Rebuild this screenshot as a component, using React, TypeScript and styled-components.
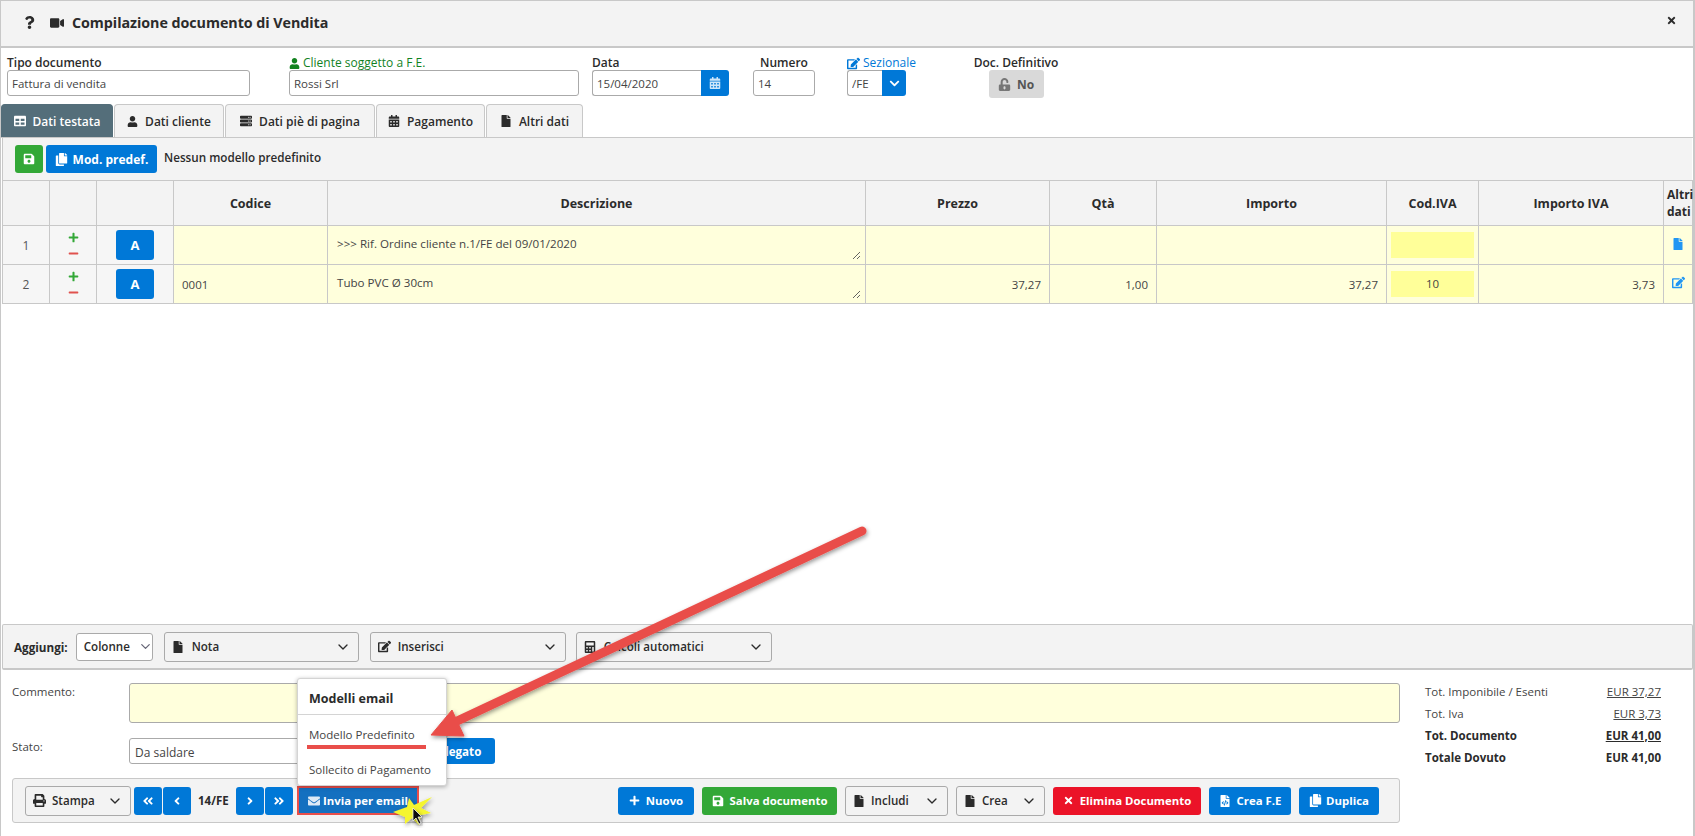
import React from "react";
import styled, { createGlobalStyle } from "styled-components";
import {
  FaQuestion,
  FaVideo,
  FaTimes,
  FaUser,
  FaEdit,
  FaCalendarAlt,
  FaChevronDown,
  FaUnlockAlt,
  FaTable,
  FaServer,
  FaFile,
  FaSave,
  FaCopy,
  FaPlus,
  FaMinus,
  FaPrint,
  FaAngleDoubleLeft,
  FaAngleLeft,
  FaAngleRight,
  FaAngleDoubleRight,
  FaEnvelope,
  FaCalculator,
  FaFileCode,
  FaPaperclip,
} from "react-icons/fa";
import { FiChevronDown } from "react-icons/fi";

const GlobalStyle = createGlobalStyle`
  html, body {
    margin: 0;
    padding: 0;
    background: #fff;
    overflow: hidden;
  }
  body {
    font-family: "Open Sans", "Liberation Sans", sans-serif;
    font-size: 12px;
    color: #333;
  }
  * { box-sizing: border-box; }
`;

const BLUE = "#0078d7";
const GREEN = "#33a837";
const LINE = "#c8c8c8";

const Page = styled.div`
  position: relative;
  width: 1695px;
  height: 836px;
  display: flex;
  flex-direction: column;
  border-left: 1px solid ${LINE};
  border-right: 2px solid ${LINE};
`;

const TitleBar = styled.header`
  height: 48px;
  flex: none;
  display: flex;
  align-items: center;
  gap: 14px;
  padding: 0 16px 2px 22px;
  background: #f3f3f3;
  border-top: 1px solid ${LINE};
  border-bottom: 2px solid ${LINE};
  color: #2b2b2b;
  svg { flex: none; }
`;

const TitleText = styled.h1`
  margin: 0 0 0 -6px;
  font-size: 14.3px;
  font-weight: 700;
  letter-spacing: -0.05px;
`;

const CloseButton = styled.span`
  margin: -5px 0 0 auto;
  display: flex;
`;

const Fields = styled.div`
  flex: none;
  height: 56px;
  display: flex;
  align-items: flex-start;
  padding: 8px 0 0 6px;
`;

const Field = styled.div<{ $width: number; $left?: number }>`
  width: ${(p) => p.$width}px;
  margin-left: ${(p) => p.$left ?? 0}px;
`;

const FieldLabel = styled.div<{ $color?: string; $light?: boolean; $center?: boolean }>`
  height: 14px;
  line-height: 14px;
  font-size: 12px;
  font-weight: ${(p) => (p.$light ? 400 : 600)};
  color: ${(p) => p.$color ?? "#2b2b2b"};
  white-space: nowrap;
  display: flex;
  align-items: center;
  gap: 3px;
  justify-content: ${(p) => (p.$center ? "center" : "flex-start")};
  svg { flex: none; }
`;

const TextInput = styled.input`
  display: block;
  width: 100%;
  height: 26px;
  padding: 0 4px;
  border: 1px solid #aaa;
  border-radius: 3px;
  background: #fff;
  font: 400 11.5px "Open Sans", sans-serif;
  color: #444;
  outline: none;
`;

const InputGroup = styled.div`
  display: flex;
  height: 26px;
  ${TextInput} {
    flex: 1;
    min-width: 0;
    border-right: 0;
    border-radius: 3px 0 0 3px;
  }
`;

const AddonButton = styled.span<{ $width: number }>`
  flex: none;
  width: ${(p) => p.$width}px;
  background: ${BLUE};
  border-radius: 0 3px 3px 0;
  color: #cfe6fa;
  display: flex;
  align-items: center;
  justify-content: center;
`;

const LockButton = styled.div`
  width: 55px;
  height: 28px;
  margin: 0 auto;
  background: #d9d9d9;
  border-radius: 3px;
  color: #555;
  font-weight: 700;
  font-size: 12px;
  display: flex;
  align-items: center;
  justify-content: center;
  gap: 6px;
`;

const Tabs = styled.nav`
  flex: none;
  height: 34px;
  display: flex;
  gap: 1px;
  border-bottom: 1px solid ${LINE};
`;

const Tab = styled.div<{ $width: number; $active?: boolean }>`
  width: ${(p) => p.$width}px;
  height: 33px;
  display: flex;
  align-items: center;
  justify-content: center;
  gap: 7px;
  font-size: 12px;
  font-weight: 600;
  border: 1px solid ${(p) => (p.$active ? "#546e7a" : LINE)};
  border-bottom: 0;
  border-radius: 4px 4px 0 0;
  background: ${(p) => (p.$active ? "#546e7a" : "#f3f3f3")};
  color: ${(p) => (p.$active ? "#fff" : "#2b2b2b")};
`;

const ModelBar = styled.div`
  flex: none;
  height: 42px;
  margin: 0 1px;
  display: flex;
  align-items: flex-start;
  padding: 7px 0 0 12px;
  gap: 3px;
  background: #f3f3f3;
  border-left: 1px solid ${LINE};
`;

const SolidButton = styled.span<{ $bg?: string; $width: number; $gap?: number }>`
  flex: none;
  width: ${(p) => p.$width}px;
  height: 28px;
  display: inline-flex;
  align-items: center;
  justify-content: center;
  gap: ${(p) => p.$gap ?? 6}px;
  background: ${(p) => p.$bg ?? BLUE};
  border-radius: 3px;
  color: #fff;
  font-size: 12px;
  font-weight: 700;
  white-space: nowrap;
`;

const ModelNote = styled.span`
  margin: 4px 0 0 4px;
  font-size: 11.7px;
  font-weight: 600;
  color: #2b2b2b;
`;

const Grid = styled.table`
  flex: none;
  width: 1690px;
  margin-left: 1px;
  table-layout: fixed;
  border-collapse: collapse;
  th, td {
    border: 1px solid ${LINE};
    padding: 0;
  }
  th {
    height: 45px;
    background: #f3f3f3;
    font-size: 12.5px;
    font-weight: 700;
    color: #2b2b2b;
  }
`;

const DataRow = styled.tr`
  height: 39px;
`;

const GreyCell = styled.td`
  background: #f6f6f6;
  text-align: center;
  color: #555;
  font-size: 12px;
`;

const YellowCell = styled.td<{ $align?: string }>`
  background: #ffffdc;
  text-align: ${(p) => p.$align ?? "left"};
  font-size: 11.5px;
  color: #444;
  padding: 0 8px !important;
`;

const DescCell = styled.td`
  background: #ffffdc;
  padding: 0 4px 0 5px !important;
`;

const DescArea = styled.textarea`
  display: block;
  width: 100%;
  height: 29px;
  padding: 5px 4px 3px;
  border: 0;
  outline: none;
  background: transparent;
  font: 400 11.6px "Open Sans", sans-serif;
  color: #444;
  resize: vertical;
`;

const RowTools = styled.div`
  display: flex;
  flex-direction: column;
  align-items: center;
  gap: 5px;
`;

const LetterButton = styled.span`
  width: 38px;
  height: 30px;
  display: inline-flex;
  align-items: center;
  justify-content: center;
  background: ${BLUE};
  border-radius: 3px;
  color: #fff;
  font-size: 13px;
  font-weight: 700;
  vertical-align: middle;
`;

const VatBox = styled.div`
  margin: 0 -4px;
  height: 26px;
  line-height: 26px;
  text-align: center;
  background: #ffff99;
`;

const ExtraHead = styled.th`
  text-align: left;
  padding-left: 3px !important;
  font-size: 12px !important;
  line-height: 17px;
  white-space: normal;
`;

const IconCell = styled.td`
  background: #ffffdc;
  text-align: center;
  color: #2196f3;
`;

const Spacer = styled.div`
  flex: 1;
`;

const AddBar = styled.div`
  flex: none;
  height: 46px;
  margin-left: 1px;
  width: 1691px;
  display: flex;
  align-items: center;
  padding-left: 11px;
  background: #f3f3f3;
  border: 1px solid ${LINE};
  border-bottom: 2px solid ${LINE};
  border-radius: 2px;
`;

const AddLabel = styled.span`
  font-size: 11.7px;
  font-weight: 700;
  color: #2b2b2b;
  margin-right: 8px;
`;

const Dropdown = styled.div<{
  $width: number;
  $left?: number;
  $white?: boolean;
  $small?: boolean;
  $gap?: number;
}>`
  flex: none;
  width: ${(p) => p.$width}px;
  height: ${(p) => (p.$small ? 28 : 30)}px;
  margin-left: ${(p) => p.$left ?? 0}px;
  display: flex;
  align-items: center;
  gap: ${(p) => p.$gap ?? 8}px;
  padding: 0 7px;
  border: 1px solid #aaa;
  border-radius: 3px;
  background: ${(p) => (p.$white ? "#fff" : "#f3f3f3")};
  font-size: 11.6px;
  font-weight: 600;
  color: #2b2b2b;
  white-space: nowrap;
  > svg:last-child {
    margin-left: auto;
    flex: none;
  }
  > svg:first-child { flex: none; }
`;

const Footer = styled.footer`
  flex: none;
  height: 166px;
  display: flex;
`;

const FooterMain = styled.div`
  width: 1388px;
  margin-left: 11px;
  padding-top: 13px;
  display: flex;
  flex-direction: column;
`;

const FormRow = styled.div<{ $height: number; $top?: number }>`
  height: ${(p) => p.$height}px;
  margin-top: ${(p) => p.$top ?? 0}px;
  display: flex;
`;

const FormLabel = styled.span`
  width: 117px;
  flex: none;
  font-size: 11.5px;
  color: #444;
  padding-top: 1px;
`;

const CommentBox = styled.div`
  flex: 1;
  background: #ffffdc;
  border: 1px solid #aaa;
  border-radius: 3px;
`;

const StateSelect = styled.div`
  width: 317px;
  border: 1px solid #aaa;
  border-radius: 3px;
  padding: 2px 5px 0;
  display: flex;
  align-items: center;
  font-size: 12px;
  color: #444;
`;

const AttachButton = styled(SolidButton)`
  height: 26px;
  margin-left: -34px;
  padding-right: 9px;
  border-radius: 0 3px 3px 0;
  font-size: 11.6px;
`;

const ActionBar = styled.div`
  height: 45px;
  margin-top: 14px;
  display: flex;
  align-items: center;
  padding: 0 20px 0 12px;
  background: #f3f3f3;
  border: 1px solid ${LINE};
  border-radius: 3px;
`;

const NavGroup = styled.div<{ $left: number }>`
  display: flex;
  gap: 1px;
  margin-left: ${(p) => p.$left}px;
`;

const NavButton = styled.span`
  width: 28px;
  height: 28px;
  display: flex;
  align-items: center;
  justify-content: center;
  background: ${BLUE};
  border-radius: 3px;
  color: #fff;
`;

const DocNumber = styled.span`
  margin: 0 7px;
  width: 31px;
  font-size: 11.5px;
  font-weight: 700;
  white-space: nowrap;
  color: #2b2b2b;
`;

const MailButton = styled(SolidButton)`
  height: 29px;
  margin-left: 4px;
  background: #1470c0;
  border: 2px solid #e94e4a;
  border-radius: 0;
  justify-content: flex-start;
  padding-left: 9px;
  gap: 3px;
  font-size: 11.4px;
`;

const RightActions = styled.div`
  margin-left: auto;
  display: flex;
  align-items: center;
  gap: 8px;
  ${SolidButton} {
    font-size: 11.4px;
  }
`;

const Totals = styled.aside`
  width: 236px;
  margin: 10px 0 0 25px;
  display: grid;
  grid-template-columns: 1fr auto;
  grid-auto-rows: 22px;
  align-items: center;
  font-size: 11.5px;
  color: #444;
`;

const TotalLabel = styled.span<{ $strong?: boolean }>`
  font-weight: ${(p) => (p.$strong ? 700 : 400)};
  color: ${(p) => (p.$strong ? "#2b2b2b" : "#444")};
`;

const TotalValue = styled(TotalLabel)<{ $plain?: boolean }>`
  justify-self: end;
  text-decoration: ${(p) => (p.$plain ? "none" : "underline")};
`;

const EmailMenu = styled.div`
  position: absolute;
  left: 296px;
  top: 678px;
  width: 150px;
  height: 108px;
  background: #fff;
  border: 1px solid #d4d4d4;
  border-radius: 3px;
  box-shadow: 0 1px 4px rgba(0, 0, 0, 0.3);
  z-index: 2;
`;

const MenuTitle = styled.div`
  height: 36px;
  padding: 11px 0 0 11px;
  font-size: 12.5px;
  font-weight: 700;
  color: #2b2b2b;
  border-bottom: 1px solid #d4d4d4;
`;

const MenuItem = styled.div<{ $top: number }>`
  margin-top: ${(p) => p.$top}px;
  padding-left: 11px;
  font-size: 11.5px;
  color: #444;
  white-space: nowrap;
`;

const Annotation = styled.svg`
  position: absolute;
  left: -1px;
  top: 0;
  width: 1695px;
  height: 836px;
  pointer-events: none;
  z-index: 3;
`;

export default function App() {
  return (
    <>
      <GlobalStyle />
      <Page>
        <TitleBar>
          <FaQuestion size={13} />
          <FaVideo size={14} />
          <TitleText>Compilazione documento di Vendita</TitleText>
          <CloseButton>
            <FaTimes size={11} />
          </CloseButton>
        </TitleBar>

        <Fields>
          <Field $width={243}>
            <FieldLabel>Tipo documento</FieldLabel>
            <TextInput readOnly value="Fattura di vendita" />
          </Field>
          <Field $width={290} $left={39}>
            <FieldLabel $color="#12821f" $light>
              <FaUser size={11} />
              Cliente soggetto a F.E.
            </FieldLabel>
            <TextInput readOnly value="Rossi Srl" />
          </Field>
          <Field $width={137} $left={13}>
            <FieldLabel>Data</FieldLabel>
            <InputGroup>
              <TextInput readOnly value="15/04/2020" />
              <AddonButton $width={28}>
                <FaCalendarAlt size={12} />
              </AddonButton>
            </InputGroup>
          </Field>
          <Field $width={62} $left={24}>
            <FieldLabel $center>Numero</FieldLabel>
            <TextInput readOnly value="14" />
          </Field>
          <Field $width={59} $left={32}>
            <FieldLabel $color={BLUE} $light>
              <FaEdit size={13} />
              Sezionale
            </FieldLabel>
            <InputGroup>
              <TextInput readOnly value="/FE" />
              <AddonButton $width={24}>
                <FaChevronDown size={11} color="#fff" />
              </AddonButton>
            </InputGroup>
          </Field>
          <Field $width={90} $left={65}>
            <FieldLabel $center>Doc. Definitivo</FieldLabel>
            <LockButton>
              <FaUnlockAlt size={13} color="#777" />
              No
            </LockButton>
          </Field>
        </Fields>

        <Tabs>
          <Tab $width={112} $active>
            <FaTable size={12} />
            Dati testata
          </Tab>
          <Tab $width={110}>
            <FaUser size={11} />
            Dati cliente
          </Tab>
          <Tab $width={150}>
            <FaServer size={12} />
            Dati piè di pagina
          </Tab>
          <Tab $width={109}>
            <FaCalendarAlt size={12} />
            Pagamento
          </Tab>
          <Tab $width={97}>
            <FaFile size={12} />
            Altri dati
          </Tab>
        </Tabs>

        <ModelBar>
          <SolidButton $bg={GREEN} $width={28}>
            <FaSave size={12} />
          </SolidButton>
          <SolidButton $width={111} $gap={5}>
            <FaCopy size={13} />
            Mod. predef.
          </SolidButton>
          <ModelNote>Nessun modello predefinito</ModelNote>
        </ModelBar>

        <Grid>
          <colgroup>
            {[47, 47, 77, 154, 538, 184, 107, 230, 92, 185, 29].map((w, i) => (
              <col key={i} width={w} />
            ))}
          </colgroup>
          <thead>
            <tr>
              <th />
              <th />
              <th />
              <th>Codice</th>
              <th>Descrizione</th>
              <th>Prezzo</th>
              <th>Qtà</th>
              <th>Importo</th>
              <th>Cod.IVA</th>
              <th>Importo IVA</th>
              <ExtraHead>Altri dati</ExtraHead>
            </tr>
          </thead>
          <tbody>
            <DataRow>
              <GreyCell>1</GreyCell>
              <GreyCell>
                <RowTools>
                  <FaPlus size={11} color={GREEN} />
                  <FaMinus size={11} color="#e0524e" />
                </RowTools>
              </GreyCell>
              <GreyCell>
                <LetterButton>A</LetterButton>
              </GreyCell>
              <YellowCell />
              <DescCell>
                <DescArea readOnly defaultValue=">>> Rif. Ordine cliente n.1/FE del 09/01/2020" />
              </DescCell>
              <YellowCell />
              <YellowCell />
              <YellowCell />
              <YellowCell>
                <VatBox />
              </YellowCell>
              <YellowCell />
              <IconCell>
                <FaFile size={12} />
              </IconCell>
            </DataRow>
            <DataRow>
              <GreyCell>2</GreyCell>
              <GreyCell>
                <RowTools>
                  <FaPlus size={11} color={GREEN} />
                  <FaMinus size={11} color="#e0524e" />
                </RowTools>
              </GreyCell>
              <GreyCell>
                <LetterButton>A</LetterButton>
              </GreyCell>
              <YellowCell>0001</YellowCell>
              <DescCell>
                <DescArea readOnly defaultValue="Tubo PVC Ø 30cm" />
              </DescCell>
              <YellowCell $align="right">37,27</YellowCell>
              <YellowCell $align="right">1,00</YellowCell>
              <YellowCell $align="right">37,27</YellowCell>
              <YellowCell>
                <VatBox>10</VatBox>
              </YellowCell>
              <YellowCell $align="right">3,73</YellowCell>
              <IconCell>
                <FaEdit size={13} />
              </IconCell>
            </DataRow>
          </tbody>
        </Grid>

        <Spacer />

        <AddBar>
          <AddLabel>Aggiungi:</AddLabel>
          <Dropdown $width={77} $white $small>
            Colonne
            <FiChevronDown size={15} color="#667" />
          </Dropdown>
          <Dropdown $width={195} $left={11}>
            <FaFile size={12} />
            Nota
            <FiChevronDown size={16} />
          </Dropdown>
          <Dropdown $width={196} $left={11} $gap={7}>
            <FaEdit size={13} />
            Inserisci
            <FiChevronDown size={16} />
          </Dropdown>
          <Dropdown $width={196} $left={10}>
            <FaCalculator size={12} />
            Calcoli automatici
            <FiChevronDown size={16} />
          </Dropdown>
        </AddBar>

        <Footer>
          <FooterMain>
            <FormRow $height={40}>
              <FormLabel>Commento:</FormLabel>
              <CommentBox />
            </FormRow>
            <FormRow $height={26} $top={15}>
              <FormLabel>Stato:</FormLabel>
              <StateSelect>Da saldare</StateSelect>
              <AttachButton $width={83}>
                <FaPaperclip size={11} />
                Allegato
              </AttachButton>
            </FormRow>
            <ActionBar>
              <Dropdown $width={106} $gap={6}>
                <FaPrint size={13} />
                Stampa
                <FiChevronDown size={16} />
              </Dropdown>
              <NavGroup $left={3}>
                <NavButton>
                  <FaAngleDoubleLeft size={12} />
                </NavButton>
                <NavButton>
                  <FaAngleLeft size={12} />
                </NavButton>
              </NavGroup>
              <DocNumber>14/FE</DocNumber>
              <NavGroup $left={0}>
                <NavButton>
                  <FaAngleRight size={12} />
                </NavButton>
                <NavButton>
                  <FaAngleDoubleRight size={12} />
                </NavButton>
              </NavGroup>
              <MailButton $width={122}>
                <FaEnvelope size={12} color="#dfeaf6" />
                Invia per email
              </MailButton>
              <RightActions>
                <SolidButton $width={76}>
                  <FaPlus size={11} />
                  Nuovo
                </SolidButton>
                <SolidButton $bg={GREEN} $width={135}>
                  <FaSave size={12} />
                  Salva documento
                </SolidButton>
                <Dropdown $width={103} $gap={6}>
                  <FaFile size={12} />
                  Includi
                  <FiChevronDown size={16} />
                </Dropdown>
                <Dropdown $width={89} $gap={6}>
                  <FaFile size={12} />
                  Crea
                  <FiChevronDown size={16} />
                </Dropdown>
                <SolidButton $bg="#eb1328" $width={148}>
                  <FaTimes size={11} />
                  Elimina Documento
                </SolidButton>
                <SolidButton $width={82}>
                  <FaFileCode size={12} />
                  Crea F.E
                </SolidButton>
                <SolidButton $width={80} $gap={4}>
                  <FaCopy size={13} />
                  Duplica
                </SolidButton>
              </RightActions>
            </ActionBar>
          </FooterMain>
          <Totals>
            <TotalLabel>Tot. Imponibile / Esenti</TotalLabel>
            <TotalValue>EUR 37,27</TotalValue>
            <TotalLabel>Tot. Iva</TotalLabel>
            <TotalValue>EUR 3,73</TotalValue>
            <TotalLabel $strong>Tot. Documento</TotalLabel>
            <TotalValue $strong>EUR 41,00</TotalValue>
            <TotalLabel $strong>Totale Dovuto</TotalLabel>
            <TotalValue $strong $plain>
              EUR 41,00
            </TotalValue>
          </Totals>
        </Footer>

        <EmailMenu>
          <MenuTitle>Modelli email</MenuTitle>
          <MenuItem $top={12}>Modello Predefinito</MenuItem>
          <MenuItem $top={20}>Sollecito di Pagamento</MenuItem>
        </EmailMenu>

        <Annotation viewBox="0 0 1695 836">
          <defs>
            <filter id="soft" x="-10%" y="-10%" width="120%" height="120%">
              <feDropShadow dx="1" dy="2" stdDeviation="2" floodColor="#000" floodOpacity="0.4" />
            </filter>
          </defs>
          <g filter="url(#soft)" fill="#e94e4a" stroke="#e94e4a">
            <line x1="862" y1="531" x2="455" y2="722" strokeWidth="9" strokeLinecap="round" />
            <polygon points="431,735 452,710 464,736" strokeWidth="1" />
          </g>
          <rect x="307" y="745" width="119" height="4" fill="#e94e4a" />
          <polygon
            filter="url(#soft)"
            fill="#f5f52e"
            points="393,812 407,807 409,798 414,805 432,797 421,808 431,813 421,815 419,825 412,818 405,824 405,817"
          />
          <path
            d="M413 808 L413 821 L416 818 L419 824 L421 823 L418 817 L422 817 Z"
            fill="#111"
            stroke="#fff"
            strokeWidth="0.7"
            filter="url(#soft)"
          />
        </Annotation>
      </Page>
    </>
  );
}
